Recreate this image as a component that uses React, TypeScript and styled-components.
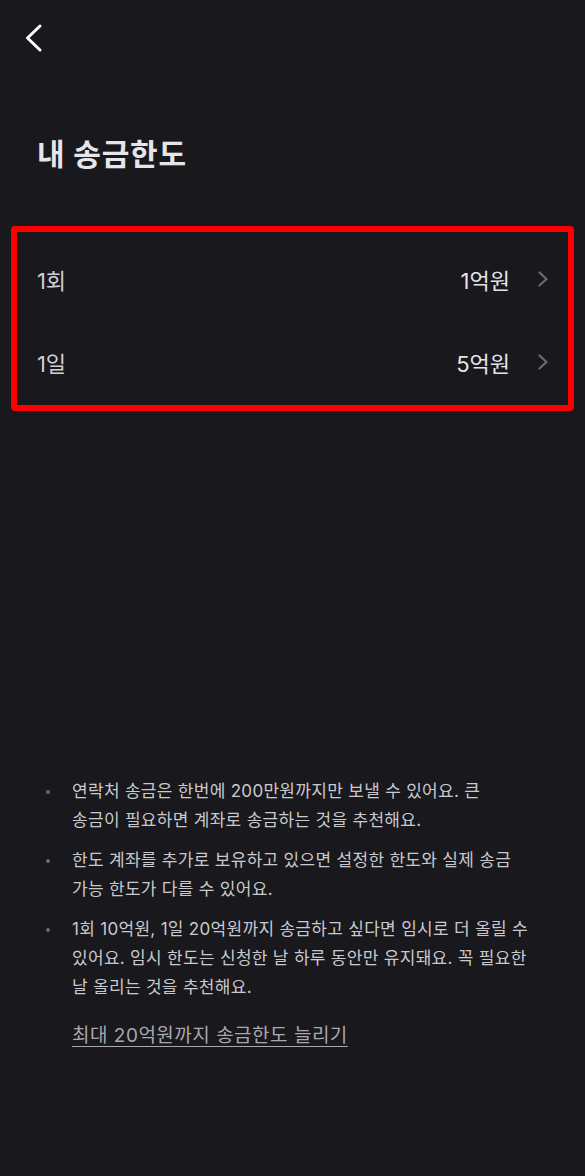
import React from 'react';
import styled, { createGlobalStyle } from 'styled-components';

const GlobalStyle = createGlobalStyle`
  html, body {
    margin: 0;
    padding: 0;
    background: #18181d;
  }
  body {
    font-family: Inter, 'Noto Sans CJK KR', 'Noto Sans', sans-serif;
    -webkit-font-smoothing: antialiased;
  }
`;

const limits = [
  { label: '1회', value: '1억원' },
  { label: '1일', value: '5억원' },
];

// Line breaks follow the reference layout
const notes = [
  ['연락처 송금은 한번에 200만원까지만 보낼 수 있어요. 큰', '송금이 필요하면 계좌로 송금하는 것을 추천해요.'],
  ['한도 계좌를 추가로 보유하고 있으면 설정한 한도와 실제 송금', '가능 한도가 다를 수 있어요.'],
  [
    '1회 10억원, 1일 20억원까지 송금하고 싶다면 임시로 더 올릴 수',
    '있어요. 임시 한도는 신청한 날 하루 동안만 유지돼요. 꼭 필요한',
    '날 올리는 것을 추천해요.',
  ],
];

export default function App() {
  return (
    <Page>
      <GlobalStyle />
      <Header>
        <BackButton aria-label="뒤로">
          <svg width="20" height="30" viewBox="0 0 20 30" fill="none">
            <path
              d="M16 3L3.5 15L16 27"
              stroke="#ffffff"
              strokeWidth="3"
              strokeLinecap="round"
              strokeLinejoin="round"
            />
          </svg>
        </BackButton>
      </Header>
      <Title>내 송금한도</Title>
      <LimitBox>
        {limits.map((item) => (
          <Row key={item.label}>
            <Label>{item.label}</Label>
            <Value>{item.value}</Value>
            <svg width="10" height="16" viewBox="0 0 10 16" fill="none">
              <path
                d="M1.5 1.5L8.5 8L1.5 14.5"
                stroke="#6b6b73"
                strokeWidth="2.2"
                strokeLinecap="round"
                strokeLinejoin="round"
              />
            </svg>
          </Row>
        ))}
      </LimitBox>
      <Spacer />
      <Notes>
        {notes.map((lines) => (
          <Note key={lines[0]}>
            {lines.map((line, i) => (
              <React.Fragment key={line}>
                {i > 0 && <br />}
                {line}
              </React.Fragment>
            ))}
          </Note>
        ))}
      </Notes>
      <MoreLink href="#">최대 20억원까지 송금한도 늘리기</MoreLink>
    </Page>
  );
}

const Page = styled.div`
  width: 585px;
  height: 1176px;
  display: flex;
  flex-direction: column;
  background: #18181d;
  box-sizing: border-box;
  padding-bottom: 126px;
`;

const Header = styled.div`
  height: 76px;
  display: flex;
  align-items: center;
  padding-left: 24px;
`;

const BackButton = styled.button`
  background: none;
  border: none;
  padding: 0;
  margin-top: -1px;
  display: flex;
`;

const Title = styled.h1`
  margin: 58px 0 0 37px;
  font-size: 30px;
  font-weight: 700;
  color: #e6e6e8;
  line-height: 40px;
  letter-spacing: 0.8px;
`;

const LimitBox = styled.div`
  margin: 52px 11px 0;
  border: 6px solid #ff0000;
  border-radius: 4px;
  padding: 5px 0 2px;
`;

const Row = styled.div`
  display: flex;
  align-items: center;
  height: 83px;
  padding: 0 20px;
  svg {
    margin-left: 28px;
  }
`;

const Label = styled.span`
  flex: 1;
  font-size: 22px;
  color: #cfcfd4;
  letter-spacing: -0.3px;
`;

const Value = styled.span`
  font-size: 22px;
  color: #e4e4e7;
  letter-spacing: 0;
`;

const Spacer = styled.div`
  flex: 1;
`;

const Notes = styled.ul`
  margin: 0;
  padding: 0 10px 0 72px;
  list-style: none;
  display: flex;
  flex-direction: column;
  gap: 11px;
`;

const Note = styled.li`
  position: relative;
  font-size: 17px;
  line-height: 29px;
  color: #c9c9ce;
  letter-spacing: 0.3px;
  white-space: nowrap;
  &::before {
    content: '';
    position: absolute;
    left: -26px;
    top: 13px;
    width: 4px;
    height: 4px;
    border-radius: 50%;
    background: #6b6b73;
  }
`;

const MoreLink = styled.a`
  align-self: flex-start;
  margin: 19px 0 0 72px;
  font-size: 19px;
  line-height: 29px;
  color: #a8a8ae;
  text-decoration: underline;
  text-underline-offset: 4px;
  letter-spacing: 0.5px;
`;
